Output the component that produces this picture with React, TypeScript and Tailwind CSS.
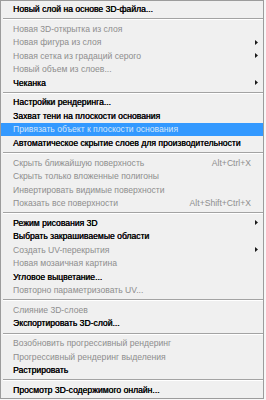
import React from "react";

type Item =
  | { sep: true }
  | { label: string; on?: boolean; sc?: string; arrow?: boolean; hl?: boolean; sep?: false };

const items: Item[] = [
  { label: "Новый слой на основе 3D-файла...", on: true },
  { sep: true },
  { label: "Новая 3D-открытка из слоя" },
  { label: "Новая фигура из слоя", arrow: true },
  { label: "Новая сетка из градаций серого", arrow: true },
  { label: "Новый объем из слоев..." },
  { label: "Чеканка", on: true, arrow: true },
  { sep: true },
  { label: "Настройки рендеринга...", on: true },
  { label: "Захват тени на плоскости основания", on: true },
  { label: "Привязать объект к плоскости основания", hl: true },
  { label: "Автоматическое скрытие слоев для производительности", on: true },
  { sep: true },
  { label: "Скрыть ближайшую поверхность", sc: "Alt+Ctrl+X" },
  { label: "Скрыть только вложенные полигоны" },
  { label: "Инвертировать видимые поверхности" },
  { label: "Показать все поверхности", sc: "Alt+Shift+Ctrl+X" },
  { sep: true },
  { label: "Режим рисования 3D", on: true, arrow: true },
  { label: "Выбрать закрашиваемые области", on: true },
  { label: "Создать UV-перекрытия", arrow: true },
  { label: "Новая мозаичная картина" },
  { label: "Угловое выцветание...", on: true },
  { label: "Повторно параметризовать UV..." },
  { sep: true },
  { label: "Слияние 3D-слоев" },
  { label: "Экспортировать 3D-слой...", on: true },
  { sep: true },
  { label: "Возобновить прогрессивный рендеринг" },
  { label: "Прогрессивный рендеринг выделения" },
  { label: "Растрировать", on: true },
  { sep: true },
  { label: "Просмотр 3D-содержимого онлайн...", on: true },
];

function Arrow({ hl }: { hl?: boolean }) {
  return (
    <svg width="3" height="5" viewBox="0 0 3 5" className="absolute right-[5px] top-[4px]">
      <path d="M0 0 L3 2.5 L0 5 Z" fill={hl ? "#ffffff" : "#1a1a1a"} />
    </svg>
  );
}

export default function App() {
  return (
    <div
      className="w-[266px] h-[400px] bg-[#f7f7f7] overflow-hidden"
      style={{ fontFamily: '"Liberation Sans", Arial, sans-serif' }}
    >
      <div className="w-[264px] h-[399px] bg-[#f0f0f0] border border-[#9c9c9c] pt-[1.5px] flex flex-col">
        {items.map((it, i) =>
          "label" in it ? (
            <div
              key={i}
              className={
                "relative h-[13.5px] shrink-0 flex items-center pl-[12px] pr-[12px] text-[8.6px] leading-none whitespace-nowrap " +
                (it.hl
                  ? "bg-[#3399ff] text-[#d4e6fa]"
                  : it.on
                  ? "text-[#000000] [text-shadow:0.35px_0_0_#000]"
                  : "text-[#8e8e8e]")
              }
            >
              <span className="flex-1">{it.label}</span>
              {it.sc && <span>{it.sc}</span>}
              {it.arrow && <Arrow hl={it.hl} />}
            </div>
          ) : (
            <div key={i} className="h-[6.2px] shrink-0 flex flex-col justify-center pl-[2px]">
              <div className="h-px bg-[#a3a3a3]" />
              <div className="h-px bg-[#ffffff]" />
            </div>
          )
        )}
      </div>
    </div>
  );
}
